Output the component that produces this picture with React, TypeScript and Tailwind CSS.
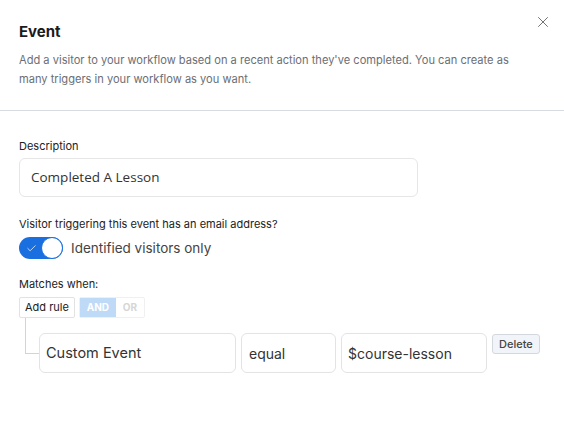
import { Check, X } from "lucide-react";

export default function App() {
  return (
    <div
      className="w-[564px] h-[433px] bg-white text-[#1f2328] overflow-hidden"
      style={{ fontFamily: "Inter, 'Noto Sans', sans-serif" }}
    >
      {/* Header */}
      <div className="relative px-[19px] pt-[22px] pb-[21px] border-b border-[#d9dbe3]">
        <h2 className="text-[15px] font-bold leading-[20px] text-[#1b1b1b]">Event</h2>
        <p className="mt-[9px] text-[11.1px] leading-[19px] text-[#6b6e75] pr-[30px]">
          Add a visitor to your workflow based on a recent action they've completed. You can create as
          many triggers in your workflow as you want.
        </p>
        <button type="button" className="absolute right-[12px] top-[13px] text-[#555]">
          <X size={18} strokeWidth={1.1} />
        </button>
      </div>

      {/* Body */}
      <div className="px-[19px] pt-[28px]">
        <label className="block text-[11px] leading-[14px] text-[#222]">Description</label>
        <div
          className="mt-[5px] w-[399px] h-[39px] rounded-[6px] border border-[#e6e6e6] flex items-center px-[11px] text-[13.5px] text-[#333]"
          style={{ fontFamily: "'Open Sans', sans-serif" }}
        >
          Completed A Lesson
        </div>

        <div className="mt-[20px] text-[11px] leading-[14px] text-[#222]">
          Visitor triggering this event has an email address?
        </div>
        <div className="mt-[6px] flex items-center gap-[8px]">
          <div className="relative w-[44px] h-[22px] rounded-full bg-[#1a6fe0]">
            <Check
              size={11}
              strokeWidth={1.6}
              className="absolute left-[7px] top-[5.5px] text-white"
            />
            <div className="absolute right-0 top-0 w-[22px] h-[22px] rounded-full bg-white border border-[#1a6fe0]" />
          </div>
          <span className="text-[13.5px] text-[#444]">Identified visitors only</span>
        </div>

        <div className="mt-[18px] text-[11px] leading-[14px] text-[#222]">Matches when:</div>
        <div className="mt-[6px] flex items-center">
          <button
            type="button"
            className="h-[21px] px-[5px] rounded-[2px] border border-[#e2e2e2] bg-white text-[11px] text-[#222]"
          >
            Add rule
          </button>
          <div className="ml-[4px] flex h-[21px] rounded-[2px] border border-[#f0f0f0]">
            <span className="w-[36px] flex items-center justify-center bg-[#bfdaf6] text-white text-[10px] font-bold">
              AND
            </span>
            <span className="w-[28px] flex items-center justify-center text-[#d6d6d6] text-[10px] font-bold">
              OR
            </span>
          </div>
        </div>

        <div className="flex">
          <div className="ml-[6px] w-[14px] h-[36px] border-l border-b border-[#d4d4d4]" />
          <div className="mt-[15px] flex items-start gap-[5px]">
            <div className="w-[197px] h-[40px] rounded-[6px] border border-[#e3e3e3] flex items-center px-[6px] text-[14.5px] text-[#333]">
              Custom Event
            </div>
            <div className="w-[95px] h-[40px] rounded-[6px] border border-[#e3e3e3] flex items-center px-[7px] text-[14px] text-[#333]">
              equal
            </div>
            <div className="w-[146px] h-[40px] rounded-[6px] border border-[#e3e3e3] flex items-center px-[6px] text-[14px] text-[#333]">
              $course-lesson
            </div>
            <button
              type="button"
              className="mt-[1px] h-[20px] px-[6px] rounded-[3px] border border-[#d3d8de] bg-[#f1f4f8] text-[11px] font-medium text-[#444]"
            >
              Delete
            </button>
          </div>
        </div>
      </div>
    </div>
  );
}
